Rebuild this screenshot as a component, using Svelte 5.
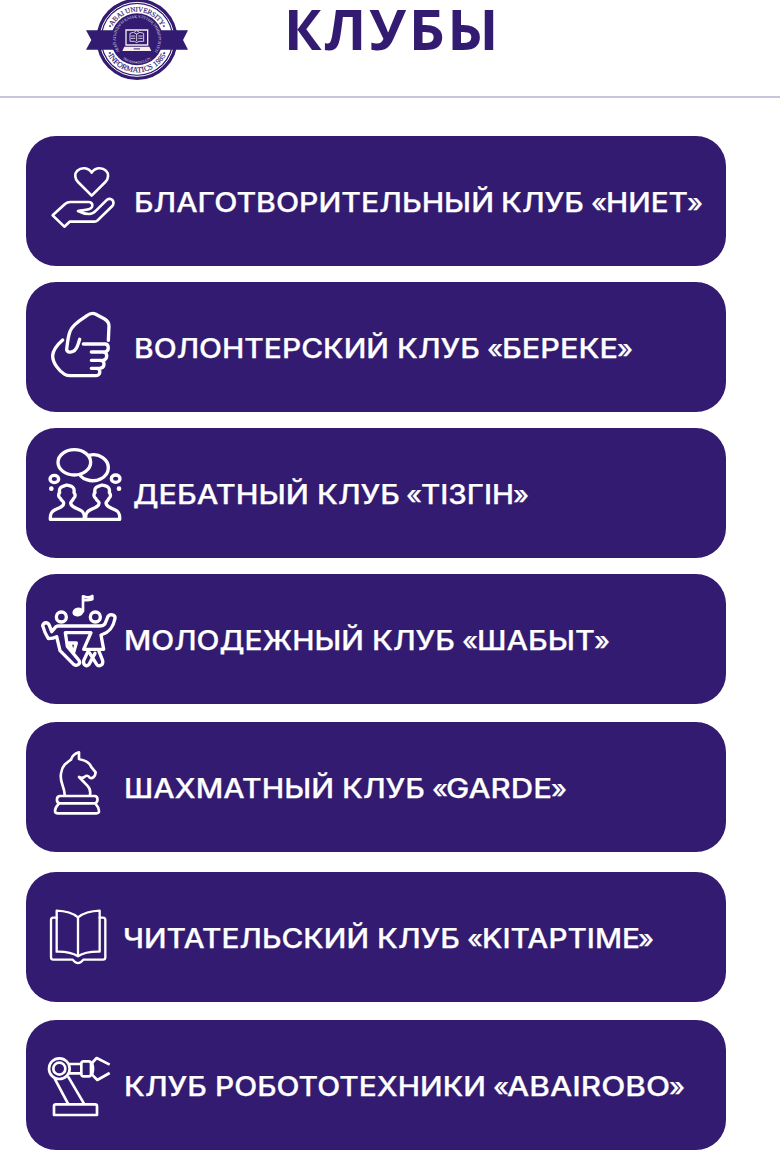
<script>
  const clubs = [
    { icon: 'heart', words: [['БЛАГОТВОРИТЕЛЬНЫЙ', 134, 360], ['КЛУБ', 501, 83], ['«', 591, 16], ['НИЕТ', 606, 82], ['»', 687, 16]], top: 19, gap: 16 },
    { icon: 'fist', words: [['ВОЛОНТЕРСКИЙ', 134, 255], ['КЛУБ', 397, 83], ['«', 487, 16], ['БЕРЕКЕ', 502, 116], ['»', 617, 16]], top: 18, gap: 16 },
    { icon: 'debate', words: [['ДЕБАТНЫЙ', 133, 176], ['КЛУБ', 317, 83], ['«', 406, 16], ['ТІЗГІН', 421, 93], ['»', 513, 16]], top: 12, gap: 16 },
    { icon: 'dance', words: [['МОЛОДЕЖНЫЙ', 124, 240], ['КЛУБ', 372, 83], ['«', 462, 16], ['ШАБЫТ', 477, 118], ['»', 594, 16]], top: 12, gap: 18 },
    { icon: 'chess', words: [['ШАХМАТНЫЙ', 124, 210], ['КЛУБ', 342, 83], ['«', 432, 16], ['GARDE', 446, 106], ['»', 551, 16]], top: 18, gap: 20 },
    { icon: 'book', words: [['ЧИТАТЕЛЬСКИЙ', 123, 246], ['КЛУБ', 377, 83], ['«', 467, 16], ['KITAPTIME', 482, 158], ['»', 638, 16]], top: 23, gap: 18 },
    { icon: 'robot', words: [['КЛУБ', 124, 83], ['РОБОТОТЕХНИКИ', 215, 271], ['«', 493, 16], ['ABAIROBO', 507, 163], ['»', 669, 16]], top: 25, gap: 0 }
  ];
  const labelLeft = 122;
</script>

<header>
  <svg class="logo" viewBox="0 0 345 240" width="115" height="80">
    <defs>
      <path id="arc-top" d="M88 118A83 83 0 0 1 254 118" />
      <path id="arc-bottom" d="M72 118A99 99 0 0 0 270 118" />
      <path id="arc-inner" d="M125 162A64 64 0 1 1 217 162" />
      <path id="arc-inner-bottom" d="M98 118A73 73 0 0 0 244 118" />
    </defs>
    <circle cx="171" cy="118" r="122" fill="#321b70" />
    <circle cx="171" cy="118" r="111" fill="none" stroke="#fff" stroke-width="3" />
    <circle cx="171" cy="118" r="106" fill="#fff" />
    <circle cx="171" cy="118" r="78" fill="#321b70" />
    <path d="M18 91H324L309 120L324 149H18L34 120Z" fill="#321b70" />
    <text class="seal" font-size="21"><textPath href="#arc-top" startOffset="50%" text-anchor="middle" textLength="192">•ABAI UNIVERSITY•</textPath></text>
    <text class="seal" font-size="23"><textPath href="#arc-bottom" startOffset="50%" text-anchor="middle" textLength="226">•INFORMATICS 1985•</textPath></text>
    <text class="small" font-size="12"><textPath href="#arc-inner" startOffset="50%" text-anchor="middle" textLength="280">АБАЙ АТЫНДАҒЫ ҚАЗАҚ ҰЛТТЫҚ УНИВЕРСИТЕТІ</textPath></text>
    <text class="small" font-size="11"><textPath href="#arc-inner-bottom" startOffset="50%" text-anchor="middle" textLength="92">INFORM ● FACULTY</textPath></text>
    <path d="M138 90H203V135H138Z" fill="#321b70" stroke="#f8edea" stroke-width="4" />
    <path d="M150 100l10-3 10 5 10-5 11 3v24h-14l-7 4-6-4h-14zM170 102v22M153 108h13M175 108h13M153 115h13M175 115h13M163 96l7-4 7 4" fill="none" stroke="#d9cde0" stroke-width="3" />
    <path d="M133 140H208L214 153H127Z" fill="#f8edea" />
    <path d="M161 144h19v5h-19z" fill="#8a76a8" />
  </svg>
  <h1>КЛУБЫ</h1>
</header>

<main>
  {#each clubs as club}
    <section class="card" style="margin-bottom: {club.gap}px">
      <svg class="icon" viewBox="0 0 258 270" width="86" height="90" style="margin-top: {club.top}px">
        {#if club.icon === 'heart'}
          <g stroke-width="8">
            <path d="M167 122L126 81C116 71 115 56 124 47C136 36 157 37 167 53C177 37 198 36 210 47C219 56 218 71 208 81Z" />
            <path d="M85 215L50 181L87 147Q94 141 103 141H158C168 141 171 150 168 156C164 164 151 164 126 168C139 175 146 177 160 177C169 177 174 173 180 167L211 136C216 131 225 130 229 135C234 140 233 149 229 153L184 197Q181 200 175 200H101Z" />
          </g>
        {:else if club.icon === 'fist'}
          <g stroke-width="10">
            <path d="M80 120C64 134 51 149 50 167C50 189 70 214 86 223Q93 227 102 227H181C194 227 196 205 181 205H166M181 205H191C207 204 209 182 193 181H166M193 181H201C216 178 216 156 201 156H166M201 156H207C221 153 219 132 207 132H142" />
            <path d="M217 121L219 78C219 68 214 62 206 57L178 42C169 38 159 42 151 48C134 59 108 75 102 94C95 114 94 132 92 149C94 158 103 158 112 154C124 149 126 133 131 118" />
          </g>
        {:else if club.icon === 'debate'}
          <g stroke-width="10">
            <ellipse cx="115" cy="67" rx="49" ry="38" />
            <path d="M159 46C190 37 218 60 217 84C216 113 181 129 152 119Q141 116 134 108" />
            <ellipse cx="55" cy="117" rx="13" ry="11" /><ellipse cx="239" cy="116" rx="13" ry="11" />
            {#each [0, 106] as shift}
              <path transform="translate({shift} 0)" d="M43 238C42 221 46 215 56 210C68 204 84 200 83 189C83 183 75 182 74 176C67 172 66 162 71 158C67 141 79 139 92 135C106 139 117 139 114 158C120 164 117 173 112 176C111 182 104 184 104 189C105 201 120 204 132 210C143 215 146 222 145 238Z" />
            {/each}
          </g>
          <circle class="solid" cx="46" cy="146" r="7" /><circle class="solid" cx="249" cy="146" r="7" />
        {:else if club.icon === 'dance'}
          <g stroke-width="10">
            <circle cx="76" cy="93" r="15" /><circle cx="178" cy="93" r="15" />
            <path d="M47 137L60 122Q63 120 68 120H191Q202 120 207 113L216 91C221 82 239 87 237 97C233 118 225 138 195 147L203 190H143L165 140H88L94 181L128 222Q134 229 128 235Q121 241 113 235L72 194L62 152Q52 157 37 158C29 146 23 130 20 119C24 108 35 107 40 118Z" />
            <path d="M94 171H121L113 199M102 171L107 190M187 191L200 224C203 238 188 244 182 235L160 200M156 196L143 224C141 237 151 244 159 235L177 202" />
          </g>
          <ellipse class="solid" cx="126" cy="78" rx="17" ry="13" transform="rotate(-15 126 78)" />
          <path d="M141 76V31Q158 38 169 30V40Q156 44 145 42" stroke-width="8" />
        {:else if club.icon === 'chess'}
          <g stroke-width="8">
            <path d="M86 164C85 135 68 125 76 96C80 75 91 69 105 59C108 48 116 41 129 37V57C147 61 161 67 165 80L179 97C178 110 169 117 161 113C156 104 149 107 144 112Q137 115 129 111L154 137Q165 148 162 164" />
            <path d="M71 168H177C187 170 187 187 177 190H71C60 188 60 170 71 168ZM67 193Q57 203 57 213Q57 220 66 220H181Q190 220 189 212Q188 202 180 193" />
          </g>
        {:else if club.icon === 'book'}
          <g stroke-width="7">
            <path d="M126 67C109 53 89 48 62 47V170Q103 169 126 184Q148 169 191 170V47C164 48 144 53 126 67ZM126 67V184" />
            <path d="M62 68H52Q45 68 45 75V187Q45 194 52 194H110Q126 215 142 194H201Q208 194 208 187V75Q208 68 201 68H191" />
          </g>
        {:else}
          <g stroke-width="8" stroke-linecap="butt">
            <circle cx="70" cy="71" r="31" /><circle cx="70" cy="71" r="18" />
            <path d="M98 57H135M99 85H135M56 101L96 176M96 94L144 176M54 210V183Q54 178 60 178H177Q183 178 183 183V210ZM168 54L182 39L221 59M168 89L184 105L221 84" />
            <rect x="136" y="49" width="29" height="45" rx="7" />
            <path d="M168 54Q174 71 168 89" />
          </g>
        {/if}
      </svg>
      <svg class="label" width="604" height="130">
        <text y="76">
          {#each club.words as [word, left, width]}<tspan class:quote={word === '«' || word === '»'} x={left - labelLeft} textLength={width} lengthAdjust="spacingAndGlyphs">{word}</tspan>{/each}
        </text>
      </svg>
    </section>
  {/each}
</main>

<style>
  :global(body) { background: #fff; overflow: hidden; }
  header {
    display: flex;
    box-sizing: border-box;
    height: 98px;
    padding-left: 80px;
    border-bottom: 2px solid #c8c4dc;
  }
  .logo { flex: none; }
  .seal { font-family: "Liberation Serif", serif; fill: #321b70; stroke: #321b70; stroke-width: .5; }
  .small { font-family: "Liberation Serif", serif; fill: #ddd6e8; }
  h1 {
    margin: 0 0 0 89px;
    font: 700 56px/56px "Open Sans", sans-serif;
    letter-spacing: 2.8px;
    color: #321b70;
  }
  main { display: flex; flex-direction: column; padding: 38px 54px 0 26px; }
  .card {
    display: flex;
    align-items: flex-start;
    box-sizing: border-box;
    width: 700px;
    height: 130px;
    padding-left: 10px;
    border-radius: 30px;
    background: #321b70;
    flex: none;
  }
  .icon { flex: none; fill: none; stroke: #fff; stroke-linecap: round; stroke-linejoin: round; }
  .solid { fill: #fff; stroke: none; }
  .label { flex: none; fill: #fff; stroke: #fff; stroke-width: .25; font: 500 27px "Inter", sans-serif; }
  .quote { font-size: 26px; font-weight: 500; }
</style>
